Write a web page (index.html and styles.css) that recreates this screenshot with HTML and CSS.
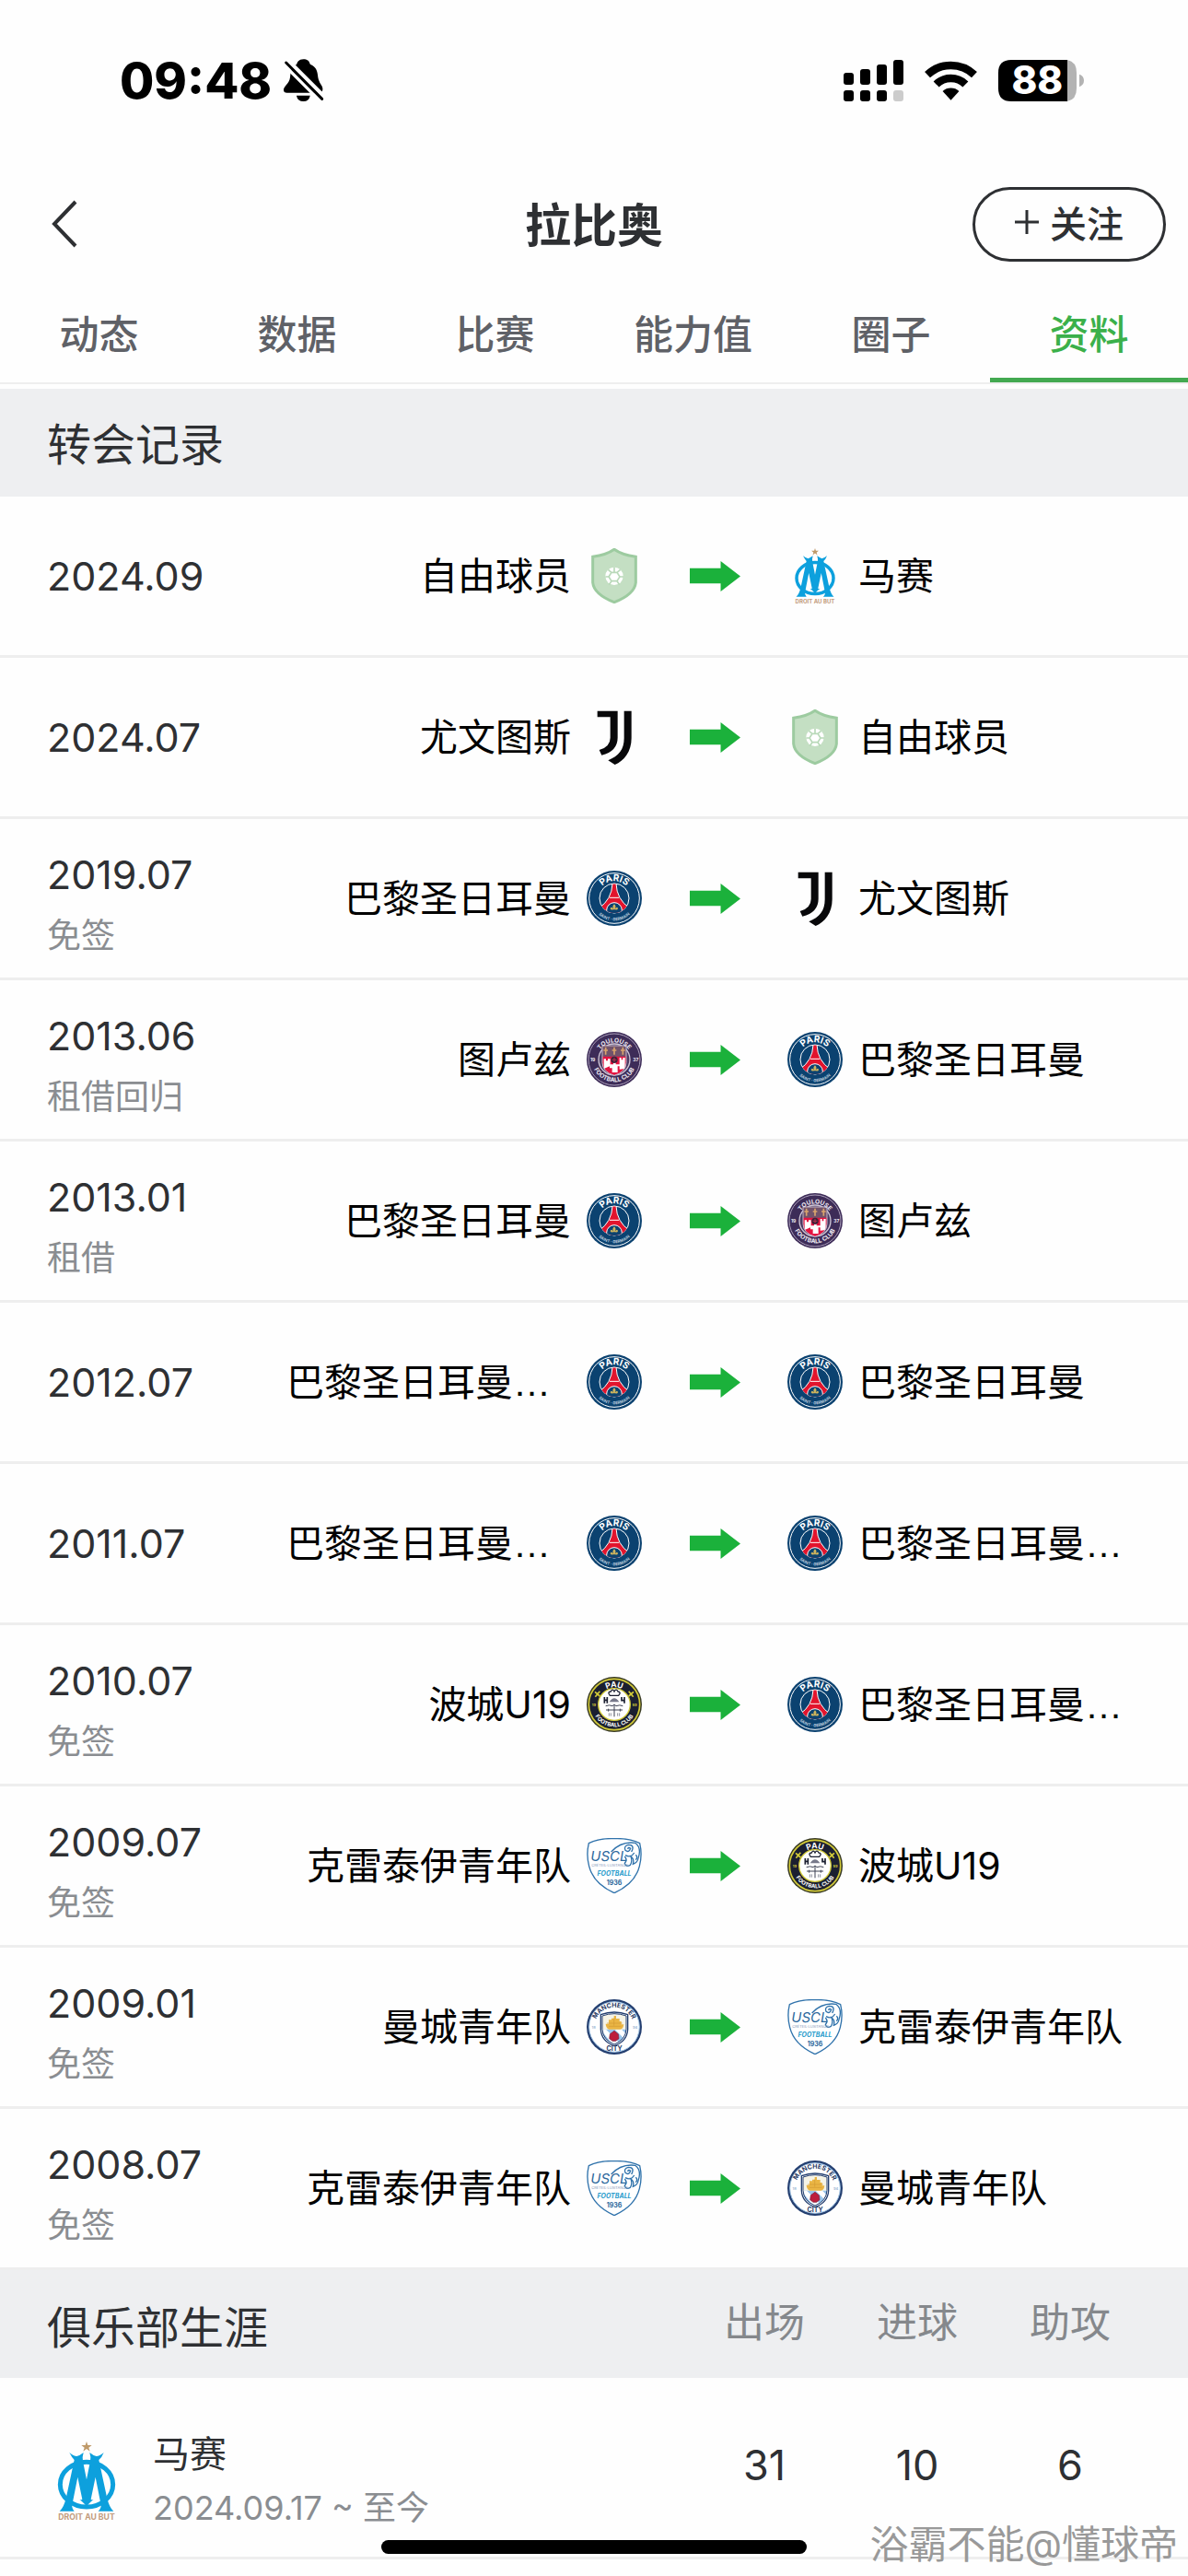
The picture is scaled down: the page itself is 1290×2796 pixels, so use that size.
FILE: index.html
```html
<!DOCTYPE html>
<html lang="zh-CN">
<head>
    <meta charset="UTF-8">
    <meta name="viewport" content="width=device-width, initial-scale=1.0">
    <title>拉比奥 - 资料</title>
    <link rel="stylesheet" href="styles.css">
</head>
<body>
    <!-- 队徽 -->
    <svg class="symbols" aria-hidden="true">
        <defs>
            <path id="arcTop" d="M34 90a56 56 0 0 1 112 0"/>
            <path id="arcTopWide" d="M26 90a64 64 0 0 1 128 0"/>
            <path id="arcBottom" d="M17 90a73 73 0 0 0 146 0"/>
            <clipPath id="psgClip"><circle cx="90" cy="90" r="48"/></clipPath>
            <clipPath id="tfcClip"><path d="M51 45h78v55q0 30-39 42q-39-12-39-42z"/></clipPath>
            <clipPath id="cityClip"><path d="M50 54q40-14 80 0v44q-2 34-40 50q-38-16-40-50z"/></clipPath>
        </defs>

        <symbol id="free" viewBox="0 0 180 180">
            <path d="M90 4Q115 22 160 28V112Q156 150 90 176Q24 150 20 112V28Q65 22 90 4Z" fill="#c4dfc3" stroke="#9dcba0" stroke-width="9"/>
            <circle cx="90" cy="91" r="29" fill="#fff"/>
            <path d="M81 79h18l9 14-9 14H81l-9-14zM90 62v17M72 93H61M108 93h12M81 107l-8 12M99 107l8 12M70 70l11 9M110 70l-11 9" fill="none" stroke="#b9d9b9" stroke-width="5"/>
        </symbol>

        <symbol id="om" viewBox="5 34 258 258">
            <path d="M134 34l4 12h13l-10 8 4 12-11-8-11 8 4-12-10-8h13z" fill="#bf9a6a"/>
            <ellipse cx="134" cy="174" rx="86" ry="73" fill="none" stroke="#0da0dd" stroke-width="15"/>
            <path d="M78 70Q92 82 102 82Q112 80 124 70Q119 86 122 98L134 158L146 98Q149 86 144 70Q156 80 166 82Q176 82 190 70Q184 86 174 94L200 215Q208 250 222 261H172Q184 250 180 236L163 150L148 222Q152 225 158 222Q148 228 134 245Q120 228 110 222Q116 225 120 222L105 150L88 236Q84 250 94 261H46Q60 250 68 215L94 94Q86 86 78 70Z" fill="#0da0dd"/>
            <text x="134" y="290" class="om-text">DROIT AU BUT</text>
        </symbol>

        <symbol id="juve" viewBox="0 0 180 180">
            <path d="M35 5H101V92Q101 136 49 149L41 132Q77 122 77 92V25H35ZM122 5H146V94C146 138 122 168 92 180L70 166C105 152 122 130 122 94Z" fill="#08080a"/>
        </symbol>

        <symbol id="psg" viewBox="0 0 180 180">
            <circle cx="90" cy="90" r="90" fill="#0b4270"/>
            <circle cx="90" cy="90" r="82" fill="none" stroke="#fff" stroke-width="3"/>
            <circle cx="90" cy="90" r="48" fill="#0b4270" stroke="#fff" stroke-width="3"/>
            <g clip-path="url(#psgClip)">
                <path d="M84 42h12q2 52 44 80l-10 18H50l-10-18q42-28 44-80z" fill="#e2142d" stroke="#fff" stroke-width="3"/>
                <path d="M75 88h30" stroke="#fff" stroke-width="3"/>
                <circle cx="90" cy="129" r="25" fill="#0b4270" stroke="#fff" stroke-width="3"/>
            </g>
            <path d="M90 109q8 8 2 15q9-9 10 0q-2 5-8 3h-8q-7 2-9-3q2-9 10 0q-5-7 3-15z" fill="#cdb35d"/>
            <text class="psg-top"><textPath href="#arcTop" startOffset="50%">PARIS</textPath></text>
            <text class="psg-bottom"><textPath href="#arcBottom" startOffset="50%">SAINT · GERMAIN</textPath></text>
        </symbol>

        <symbol id="tfc" viewBox="0 0 180 180">
            <circle cx="90" cy="90" r="90" fill="#3d2c58"/>
            <circle cx="90" cy="90" r="84" fill="none" stroke="#a99db8" stroke-width="3"/>
            <circle cx="90" cy="90" r="51" fill="#4b3a63" stroke="#cfc6d6" stroke-width="4"/>
            <g clip-path="url(#tfcClip)">
                <path d="M45 40h90v44H45z" fill="#71536b"/>
                <path d="M45 80h90v70H45z" fill="#e41340"/>
                <path d="M56 120V88h7v6h6v-6h8v18h10v-8h8v8h12V84h6v7h5v-7h7v36l-18 2v-10h-6v20H83v-14h-8v-6z" fill="#fff"/>
                <path d="M62 50v24M55 60h14M90 50v24M83 60h14M118 50v24M111 60h14" stroke="#dba56c" stroke-width="5"/>
                <circle cx="90" cy="91" r="11" fill="#3d2238"/>
                <path d="M90 84v14M83 91h14" stroke="#b13450" stroke-width="3"/>
            </g>
            <path d="M51 45h78v55q0 30-39 42q-39-12-39-42z" fill="none" stroke="#c7b9cb" stroke-width="3"/>
            <text class="tfc-text"><textPath href="#arcTop" startOffset="50%">TOULOUSE</textPath></text>
            <text class="tfc-text"><textPath href="#arcBottom" startOffset="50%">FOOTBALL CLUB</textPath></text>
            <text x="20" y="96" class="tfc-year">19</text>
            <text x="160" y="96" class="tfc-year">37</text>
        </symbol>

        <symbol id="pau" viewBox="0 0 180 180">
            <circle cx="90" cy="90" r="90" fill="#383a24"/>
            <circle cx="90" cy="90" r="83" fill="#1b1f30" stroke="#d3cb39" stroke-width="5"/>
            <circle cx="90" cy="90" r="52" fill="#fff" stroke="#d3cb39" stroke-width="4"/>
            <path d="M27 49l16 14M43 47L28 65M137 47l15 18M153 49l-16 14" stroke="#d3cb39" stroke-width="5"/>
            <path d="M76 61q-10-12 3-13q5-11 11 0q6-11 12 0q12 2 2 13z" fill="none" stroke="#1b1f30" stroke-width="4"/>
            <path d="M74 82q16-24 32 0z" fill="#77798a"/>
            <path d="M58 66v20M67 66v20M58 76h10M114 66v11h10M123 66v20" stroke="#1b1f30" stroke-width="5" fill="none"/>
            <path d="M62 95q12-5 22 0l6-5 6 5q12-5 22 0M63 108h54M90 92v38M71 104v9M109 104v9" stroke="#3c4052" stroke-width="3" fill="none"/>
            <path d="M73 118v10M79 118v10M101 118v10M107 118v10" stroke="#8c8f9c" stroke-width="3"/>
            <text class="pau-top"><textPath href="#arcTop" startOffset="50%">PAU</textPath></text>
            <text class="pau-bottom"><textPath href="#arcBottom" startOffset="50%">FOOTBALL CLUB</textPath></text>
            <text x="24" y="96" class="pau-year">19</text>
            <text x="156" y="96" class="pau-year">59</text>
        </symbol>

        <symbol id="uscl" viewBox="0 0 180 180">
            <path d="M90 2Q42 0 7 17Q-2 55 8 92Q22 148 90 179Q158 148 172 92Q182 55 173 17Q138 0 90 2Z" fill="#fff" stroke="#2f72ab" stroke-width="4"/>
            <path d="M80 45Q112 10 158 16Q180 32 168 66Q166 80 151 85Q156 68 144 60Q150 76 142 88Q128 96 124 82Q134 72 124 60" fill="none" stroke="#2f72ab" stroke-width="4"/>
            <path d="M146 45Q158 22 136 22Q120 26 126 40Q138 49 143 34Q136 28 134 36M126 56Q144 66 155 48M160 55q8 8 0 16" fill="none" stroke="#2f72ab" stroke-width="4"/>
            <text x="13" y="75" class="uscl-name">USCL</text>
            <text x="16" y="93" class="uscl-sub">CRÉTEIL·LUSITANOS</text>
            <text x="90" y="123" class="uscl-foot">FOOTBALL</text>
            <text x="90" y="154" class="uscl-year">1936</text>
        </symbol>

        <symbol id="city" viewBox="0 0 180 180">
            <circle cx="90" cy="90" r="90" fill="#243f70"/>
            <circle cx="90" cy="90" r="82" fill="#fff" stroke="#9fc3e4" stroke-width="3"/>
            <path d="M46 50q44-16 88 0v48q-2 38-44 54q-42-16-44-54z" fill="#fff" stroke="#243f70" stroke-width="4"/>
            <g clip-path="url(#cityClip)">
                <path d="M45 45h90v110H45z" fill="#f5f3e6"/>
                <path d="M45 98h90v60H45z" fill="#9ac5eb"/>
                <path d="M45 98h18l52 52-18 12zM92 98h22l25 25v22z" fill="#fff"/>
                <path d="M62 80h10V67h9v-5h8v-8h7v9h11v9h6v10h8q-2 16-12 16H73q-10-4-11-18z" fill="#eab544"/>
                <path d="M66 78h50M72 88h40M89 62v24" stroke="#d29a33" stroke-width="2"/>
            </g>
            <path d="M90 103l13 10 2 15-10 8H84l-10-8 2-15z" fill="#bd1d3c" stroke="#741d3d" stroke-width="2"/>
            <path d="M51 54q39-14 78 0v44q-2 34-39 49q-37-15-39-49z" fill="none" stroke="#243f70" stroke-width="3"/>
            <text class="city-text"><textPath href="#arcTopWide" startOffset="50%">MANCHESTER</textPath></text>
            <text x="90" y="168" class="city-name">CITY</text>
            <text x="23" y="97" class="city-year">18</text>
            <text x="158" y="97" class="city-year">94</text>
        </symbol>

        <symbol id="arrow" viewBox="0 0 164 98">
            <path d="M0 23H100V0L164 49L100 98V72H0Z" fill="#1bb13b"/>
        </symbol>
    </svg>

    <!-- 状态栏 -->
    <div class="status">
        <div class="clock">
            <span>09:48</span>
            <svg class="bell" viewBox="560 40 136 148">
                <path d="M628 44C612 44 608 54 606 60C586 70 586 90 584 104C582 124 563 132 563 144Q563 154 574 154H682Q692 152 691 140C690 128 680 124 676 104C674 84 672 70 650 60C646 48 640 44 628 44ZM605 163H650Q646 182 628 182Q609 182 605 163Z"/>
                <path d="M577 48L697 168" stroke="#fff" stroke-width="14"/>
                <path d="M564 62L684 182" stroke="#fff" stroke-width="10"/>
                <path d="M571 55L689 174" stroke="#000" stroke-width="9" stroke-linecap="round"/>
            </svg>
        </div>
        <div class="signals">
            <svg class="signal" viewBox="0 0 195 135">
                <rect x="0" y="42" width="33" height="39" rx="9"/>
                <rect x="54" y="30" width="33" height="51" rx="9"/>
                <rect x="108" y="15" width="33" height="66" rx="9"/>
                <rect x="162" y="0" width="33" height="81" rx="9"/>
                <rect x="0" y="99" width="33" height="36" rx="9"/>
                <rect x="54" y="99" width="33" height="36" rx="9"/>
                <rect x="108" y="99" width="33" height="36" rx="9"/>
                <rect x="162" y="99" width="33" height="36" rx="9" fill="#ccc"/>
            </svg>
            <svg class="wifi" viewBox="0 0 172 130">
                <path d="M9 46A112 112 0 0 1 163 46M38 77A69 69 0 0 1 134 77" fill="none" stroke="#000" stroke-width="26"/>
                <path d="M86 129L59 100A40 40 0 0 1 113 100Z"/>
            </svg>
            <svg class="battery" viewBox="0 0 279 135">
                <path d="M225 0Q255 6 255 42V93Q255 129 225 135ZM264 47Q279 52 279 67T264 88Z" fill="#b3b3b3"/>
                <path d="M42 0H225V135H42Q0 135 0 93V42Q0 0 42 0Z"/>
                <text x="127" y="112" class="level">88</text>
            </svg>
        </div>
    </div>

    <header class="header">
        <button class="back" type="button" aria-label="返回">
            <svg viewBox="0 0 28 52"><path d="M26 2L3 26L26 50"/></svg>
        </button>
        <h1>拉比奥</h1>
        <button class="follow" type="button">
            <svg viewBox="0 0 26 26"><path d="M13 0V26M0 13H26"/></svg>
            关注
        </button>
    </header>

    <nav class="tabs">
        <a href="#">动态</a>
        <a href="#">数据</a>
        <a href="#">比赛</a>
        <a href="#">能力值</a>
        <a href="#">圈子</a>
        <a href="#" class="active">资料</a>
    </nav>

    <main>
        <!-- 转会记录 -->
        <h2 class="title">转会记录</h2>
        <ul class="transfers">
            <li>
                <div class="date">2024.09</div>
                <span class="from">自由球员</span>
                <svg class="logo"><use href="#free"/></svg>
                <svg class="arrow"><use href="#arrow"/></svg>
                <svg class="logo"><use href="#om"/></svg>
                <span class="to">马赛</span>
            </li>
            <li>
                <div class="date">2024.07</div>
                <span class="from">尤文图斯</span>
                <svg class="logo"><use href="#juve"/></svg>
                <svg class="arrow"><use href="#arrow"/></svg>
                <svg class="logo"><use href="#free"/></svg>
                <span class="to">自由球员</span>
            </li>
            <li>
                <div class="date">2019.07<small>免签</small></div>
                <span class="from">巴黎圣日耳曼</span>
                <svg class="logo"><use href="#psg"/></svg>
                <svg class="arrow"><use href="#arrow"/></svg>
                <svg class="logo"><use href="#juve"/></svg>
                <span class="to">尤文图斯</span>
            </li>
            <li>
                <div class="date">2013.06<small>租借回归</small></div>
                <span class="from">图卢兹</span>
                <svg class="logo"><use href="#tfc"/></svg>
                <svg class="arrow"><use href="#arrow"/></svg>
                <svg class="logo"><use href="#psg"/></svg>
                <span class="to">巴黎圣日耳曼</span>
            </li>
            <li>
                <div class="date">2013.01<small>租借</small></div>
                <span class="from">巴黎圣日耳曼</span>
                <svg class="logo"><use href="#psg"/></svg>
                <svg class="arrow"><use href="#arrow"/></svg>
                <svg class="logo"><use href="#tfc"/></svg>
                <span class="to">图卢兹</span>
            </li>
            <li>
                <div class="date">2012.07</div>
                <span class="from long">巴黎圣日耳曼<span class="dots">…</span></span>
                <svg class="logo"><use href="#psg"/></svg>
                <svg class="arrow"><use href="#arrow"/></svg>
                <svg class="logo"><use href="#psg"/></svg>
                <span class="to">巴黎圣日耳曼</span>
            </li>
            <li>
                <div class="date">2011.07</div>
                <span class="from long">巴黎圣日耳曼<span class="dots">…</span></span>
                <svg class="logo"><use href="#psg"/></svg>
                <svg class="arrow"><use href="#arrow"/></svg>
                <svg class="logo"><use href="#psg"/></svg>
                <span class="to">巴黎圣日耳曼<span class="dots">…</span></span>
            </li>
            <li>
                <div class="date">2010.07<small>免签</small></div>
                <span class="from">波城U19</span>
                <svg class="logo"><use href="#pau"/></svg>
                <svg class="arrow"><use href="#arrow"/></svg>
                <svg class="logo"><use href="#psg"/></svg>
                <span class="to">巴黎圣日耳曼<span class="dots">…</span></span>
            </li>
            <li>
                <div class="date">2009.07<small>免签</small></div>
                <span class="from">克雷泰伊青年队</span>
                <svg class="logo"><use href="#uscl"/></svg>
                <svg class="arrow"><use href="#arrow"/></svg>
                <svg class="logo"><use href="#pau"/></svg>
                <span class="to">波城U19</span>
            </li>
            <li>
                <div class="date">2009.01<small>免签</small></div>
                <span class="from">曼城青年队</span>
                <svg class="logo"><use href="#city"/></svg>
                <svg class="arrow"><use href="#arrow"/></svg>
                <svg class="logo"><use href="#uscl"/></svg>
                <span class="to">克雷泰伊青年队</span>
            </li>
            <li>
                <div class="date">2008.07<small>免签</small></div>
                <span class="from">克雷泰伊青年队</span>
                <svg class="logo"><use href="#uscl"/></svg>
                <svg class="arrow"><use href="#arrow"/></svg>
                <svg class="logo"><use href="#city"/></svg>
                <span class="to">曼城青年队</span>
            </li>
        </ul>

        <!-- 俱乐部生涯 -->
        <table class="career">
            <thead>
                <tr>
                    <th class="club">俱乐部生涯</th>
                    <th>出场</th>
                    <th>进球</th>
                    <th>助攻</th>
                    <th class="edge"></th>
                </tr>
            </thead>
            <tbody>
                <tr>
                    <td class="club">
                        <div class="team">
                            <svg class="crest"><use href="#om"/></svg>
                            <div>
                                <p>马赛</p>
                                <p class="period">2024.09.17 ~ 至今</p>
                            </div>
                        </div>
                    </td>
                    <td>31</td>
                    <td>10</td>
                    <td>6</td>
                    <td class="edge"></td>
                </tr>
            </tbody>
        </table>
    </main>

    <div class="homebar"></div>
    <div class="watermark">浴霸不能@懂球帝</div>
</body>
</html>
```
FILE: styles.css
```css
*{
    box-sizing: border-box;
}
body{
    position: relative;
    min-height: 100vh;
    margin: 0;
    background: #fefefe;
    color: #2e3033;
    font-family: Inter, "Noto Sans CJK SC", sans-serif;
}
h1, h2, p, ul{
    margin: 0;
    padding: 0;
}
.symbols{
    position: absolute;
    width: 0;
    height: 0;
}
/* 状态栏 */
.status{
    display: flex;
    justify-content: space-between;
    height: 174px;
    padding: 0 113px 0 130px;
    color: #000;
}
.clock, .signals{
    display: flex;
    align-items: center;
    height: 174px;
}
.clock{
    gap: 12px;
    font-size: 54px;
    font-weight: 800;
}
.bell{
    width: 45px;
    height: 49px;
}
.signals{
    gap: 23px;
}
.signal{
    width: 65px;
    height: 45px;
}
.wifi{
    width: 57px;
    height: 43px;
}
.battery{
    width: 93px;
    height: 45px;
}
.level{
    fill: #fff;
    font-size: 126px;
    font-weight: 800;
    text-anchor: middle;
}
/* 标题栏 */
.header{
    display: grid;
    grid-template-columns: 1fr auto 1fr;
    align-items: center;
    height: 138px;
    padding: 0 24px 0 56px;
}
h1{
    padding: 4px 32px 0 0;
    font-size: 50px;
    line-height: 60px;
    font-weight: 700;
}
.header button{
    border: 0;
    background: none;
    font-family: inherit;
    color: inherit;
}
.header .back{
    justify-self: start;
    padding: 0;
}
.back svg{
    display: block;
    width: 28px;
    height: 52px;
    fill: none;
    stroke: #2e3033;
    stroke-width: 4;
}
.header .follow{
    display: flex;
    align-items: center;
    justify-content: center;
    justify-self: end;
    gap: 12px;
    width: 210px;
    height: 81px;
    padding: 0 0 4px;
    border: 3px solid #2e3033;
    border-radius: 41px;
    font-size: 40px;
    font-weight: 500;
}
.follow svg{
    width: 26px;
    height: 26px;
    stroke: #2e3033;
    stroke-width: 3;
}
/* 导航 */
.tabs{
    display: flex;
    height: 105px;
    margin-bottom: 5px;
    border-bottom: 2px solid #eee;
}
.tabs a{
    flex: 1;
    color: #5f6167;
    font-size: 43px;
    line-height: 102px;
    font-weight: 500;
    text-align: center;
    text-decoration: none;
}
.tabs .active{
    color: #3bb04a;
    border-bottom: 5px solid #43a951;
}
/* 转会记录 */
.title{
    height: 117px;
    padding-left: 51px;
    background: #eeeff1;
    font-size: 48px;
    line-height: 122px;
    font-weight: 400;
}
.transfers{
    list-style: none;
}
.transfers li{
    display: grid;
    grid-template-columns: 243fr 309px 60px 124px 60px 358fr;
    column-gap: 17px;
    align-items: center;
    height: 175px;
    padding-left: 51px;
    border-bottom: 3px solid #eee;
}
.date{
    font-size: 43px;
    line-height: 54px;
    white-space: nowrap;
}
.date small{
    display: block;
    margin-top: 28px;
    color: #8a8d91;
    font-size: 37px;
    line-height: 24px;
}
.from, .to{
    color: #000;
    font-size: 41px;
    line-height: 60px;
    white-space: nowrap;
}
.from{
    text-align: right;
}
.long{
    text-align: left;
}
.dots{
    font-family: "Liberation Sans", sans-serif;
}
.logo{
    width: 60px;
    height: 60px;
}
.arrow{
    justify-self: center;
    width: 55px;
    height: 33px;
}
/* 俱乐部生涯 */
.career{
    width: 100%;
    border-collapse: collapse;
    table-layout: fixed;
}
.career th, .career td{
    width: 166px;
    padding: 0;
    font-weight: 400;
    text-align: center;
}
.career th{
    height: 117px;
    padding-bottom: 10px;
    background: #eeeff1;
    color: #85888c;
    font-size: 44px;
}
.career td{
    height: 195px;
    padding-bottom: 4px;
    border-bottom: 3px solid #eee;
    font-size: 45px;
}
.career .club{
    width: auto;
    padding: 0 0 0 51px;
    text-align: left;
}
.career th.club{
    color: #2e3033;
    font-size: 48px;
}
.career .edge{
    width: 45px;
}
.team{
    display: flex;
    align-items: center;
    gap: 29px;
    padding-top: 30px;
    font-size: 40px;
    line-height: 58px;
}
.crest{
    width: 86px;
    height: 86px;
}
.period{
    color: #8a8d91;
    font-size: 36px;
}
/* 底部 */
.homebar{
    position: absolute;
    left: 50%;
    bottom: 24px;
    width: 462px;
    height: 15px;
    margin-left: -231px;
    border-radius: 8px;
    background: #000;
}
.watermark{
    position: absolute;
    right: 11px;
    bottom: 4px;
    color: #999;
    font-size: 42px;
    line-height: 60px;
}
/* 队徽文字 */
symbol text{
    font-family: Inter, sans-serif;
    font-weight: 700;
    text-anchor: middle;
}
.om-text{
    fill: #c29b7c;
    font-size: 26px;
}
.psg-top{
    fill: #fff;
    font-size: 30px;
}
.psg-bottom{
    fill: #b9cbdc;
    font-size: 13px;
}
.tfc-text{
    fill: #efeaf3;
    font-size: 20px;
}
.tfc-year{
    fill: #efeaf3;
    font-size: 15px;
}
.pau-top{
    fill: #fff;
    font-size: 26px;
}
.pau-bottom{
    fill: #fff;
    font-size: 18px;
}
.pau-year{
    fill: #d3cb39;
    font-size: 12px;
}
symbol .uscl-name{
    fill: #2c689c;
    font-size: 45px;
    font-style: italic;
    font-weight: 400;
    text-anchor: start;
}
symbol .uscl-sub{
    fill: #8899b8;
    font-size: 12px;
    font-weight: 400;
    text-anchor: start;
}
.uscl-foot{
    fill: #2a9ccc;
    font-size: 21px;
    font-style: italic;
}
.uscl-year{
    fill: #2c689c;
    font-size: 21px;
}
.city-text{
    fill: #26375f;
    font-size: 21px;
}
.city-name{
    fill: #26375f;
    font-size: 21px;
}
.city-year{
    fill: #9fb8d4;
    font-size: 12px;
}
```
